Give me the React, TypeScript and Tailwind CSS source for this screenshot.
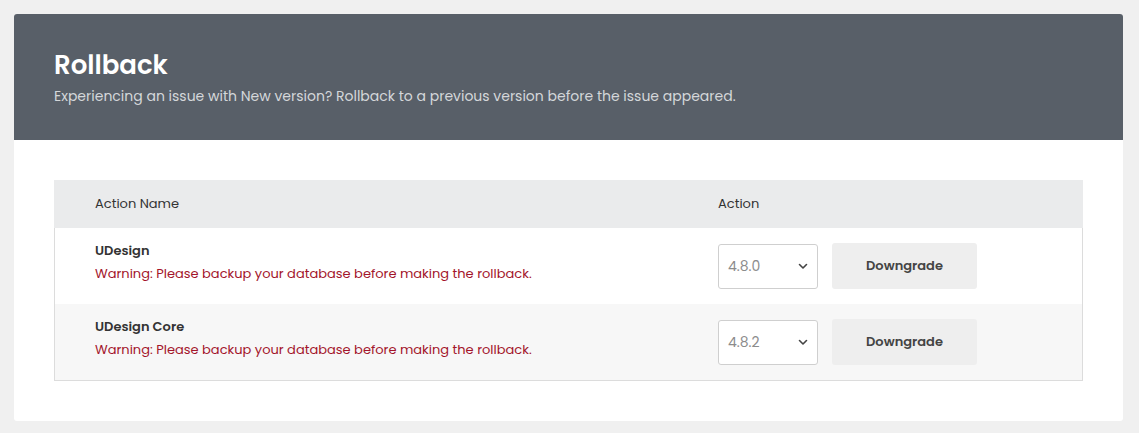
const font = { fontFamily: '"Poppins", "Open Sans", "Liberation Sans", sans-serif' };

const rows = [
  { name: "UDesign", version: "4.8.0", alt: false },
  { name: "UDesign Core", version: "4.8.2", alt: true },
];

function Chevron() {
  return (
    <svg width="12" height="12" viewBox="0 0 12 12" fill="none" className="text-[#444]">
      <path d="M2.5 4.5L6 8l3.5-3.5" stroke="currentColor" strokeWidth="1.6" strokeLinecap="round" strokeLinejoin="round" />
    </svg>
  );
}

export default function App() {
  return (
    <div className="min-h-[433px] bg-[#f0f0f0] p-[14px] pr-[16px]" style={font}>
      <div className="overflow-hidden rounded-[3px] bg-white">
        <div className="bg-[#585f68] px-10 pt-[33px] pb-[33px]">
          <h1 className="text-[26px] font-semibold leading-[36px] text-white">Rollback</h1>
          <p className="mt-[2px] text-[14px] leading-[22px] text-[#d4d7da]">
            Experiencing an issue with New version? Rollback to a previous version before the issue appeared.
          </p>
        </div>
        <div className="px-10 pt-10 pb-10">
          <div className="border-x border-b border-[#dcdcdc]">
            <div className="-mx-px flex h-12 items-center bg-[#eaebec] text-[13px] text-[#333]">
              <div className="w-[664px] pl-[41px]">Action Name</div>
              <div>Action</div>
            </div>
            {rows.map((r) => (
              <div key={r.name} className={`flex h-[76px] items-center ${r.alt ? "bg-[#f7f7f7]" : "bg-white"}`}>
                <div className="w-[663px] pb-2 pl-10">
                  <div className="text-[13px] font-semibold leading-5 text-[#333]">{r.name}</div>
                  <div className="mt-[3px] text-[13px] leading-5 text-[#a3152b]">
                    Warning: Please backup your database before making the rollback.
                  </div>
                </div>
                <div className="flex items-center gap-[14px]">
                  <div className="flex h-[45px] w-[100px] items-center justify-between rounded-[3px] border border-[#cfcfcf] bg-white pl-[9px] pr-[8px]">
                    <span className="text-[14px] text-[#8c8c8c]">{r.version}</span>
                    <Chevron />
                  </div>
                  <button className="h-[46px] w-[145px] rounded-[3px] bg-[#eeeeee] text-[13px] font-semibold text-[#444]">
                    Downgrade
                  </button>
                </div>
              </div>
            ))}
          </div>
        </div>
      </div>
    </div>
  );
}
